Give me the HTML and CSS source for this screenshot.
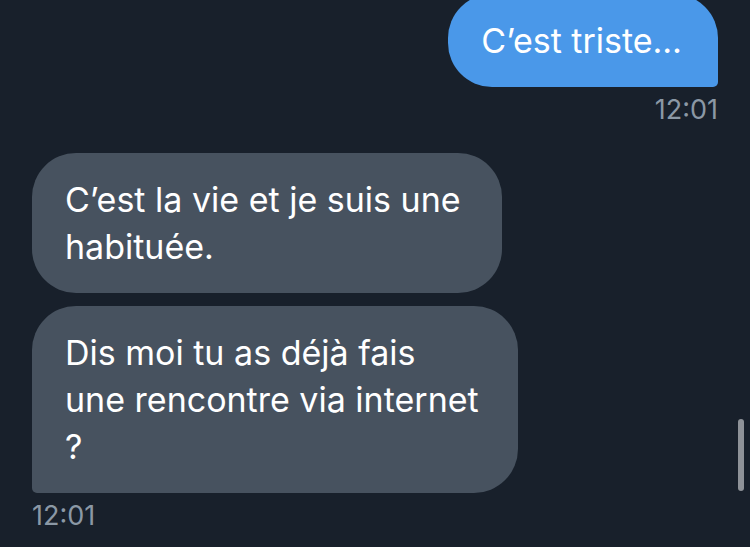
FILE: index.html
```html
<!DOCTYPE html>
<html lang="fr">
<head>
<meta charset="utf-8">
<link rel="stylesheet" href="styles.css">
</head>
<body>
<div class="chat">
  <div class="group group-out">
    <div class="bubble bubble-out">C’est triste…</div>
    <div class="time">12:01</div>
  </div>
  <div class="group group-in">
    <div class="bubble bubble-in bubble-first">C’est la vie et je suis une habituée.</div>
    <div class="bubble bubble-in bubble-last">Dis moi tu as déjà fais une rencontre via internet ?</div>
    <div class="time">12:01</div>
  </div>
</div>
<div class="scrollbar"></div>
</body>
</html>
```
FILE: styles.css
```css
html, body {
  margin: 0;
  height: 100%;
  background: #18202b;
  overflow: hidden;
}
body {
  font-family: Inter, "Liberation Sans", Arial, sans-serif;
  color: #ffffff;
}
.chat {
  display: flex;
  flex-direction: column;
  gap: 28px;
  padding: 0 32px;
  margin-top: -6px;
}
.group {
  display: flex;
  flex-direction: column;
  gap: 13px;
}
.group-out {
  align-items: flex-end;
}
.group-in {
  align-items: flex-start;
}
.bubble {
  box-sizing: border-box;
  font-size: 34px;
  line-height: 47px;
  padding: 23px 33px;
  border-radius: 44px;
}
.bubble-out {
  background: #4a98e9;
  border-bottom-right-radius: 5px;
  padding-right: 36px;
}
.bubble-in {
  background: #47525f;
}
.bubble-first {
  width: 470px;
}
.bubble-last {
  width: 486px;
  padding-right: 39px;
  border-bottom-left-radius: 5px;
}
.time {
  font-size: 27px;
  line-height: 30px;
  color: #8b98a5;
  margin-top: -5px;
}
.scrollbar {
  position: absolute;
  left: 738px;
  top: 419px;
  width: 6px;
  height: 72px;
  border-radius: 3px;
  background: #8e9298;
}
```
